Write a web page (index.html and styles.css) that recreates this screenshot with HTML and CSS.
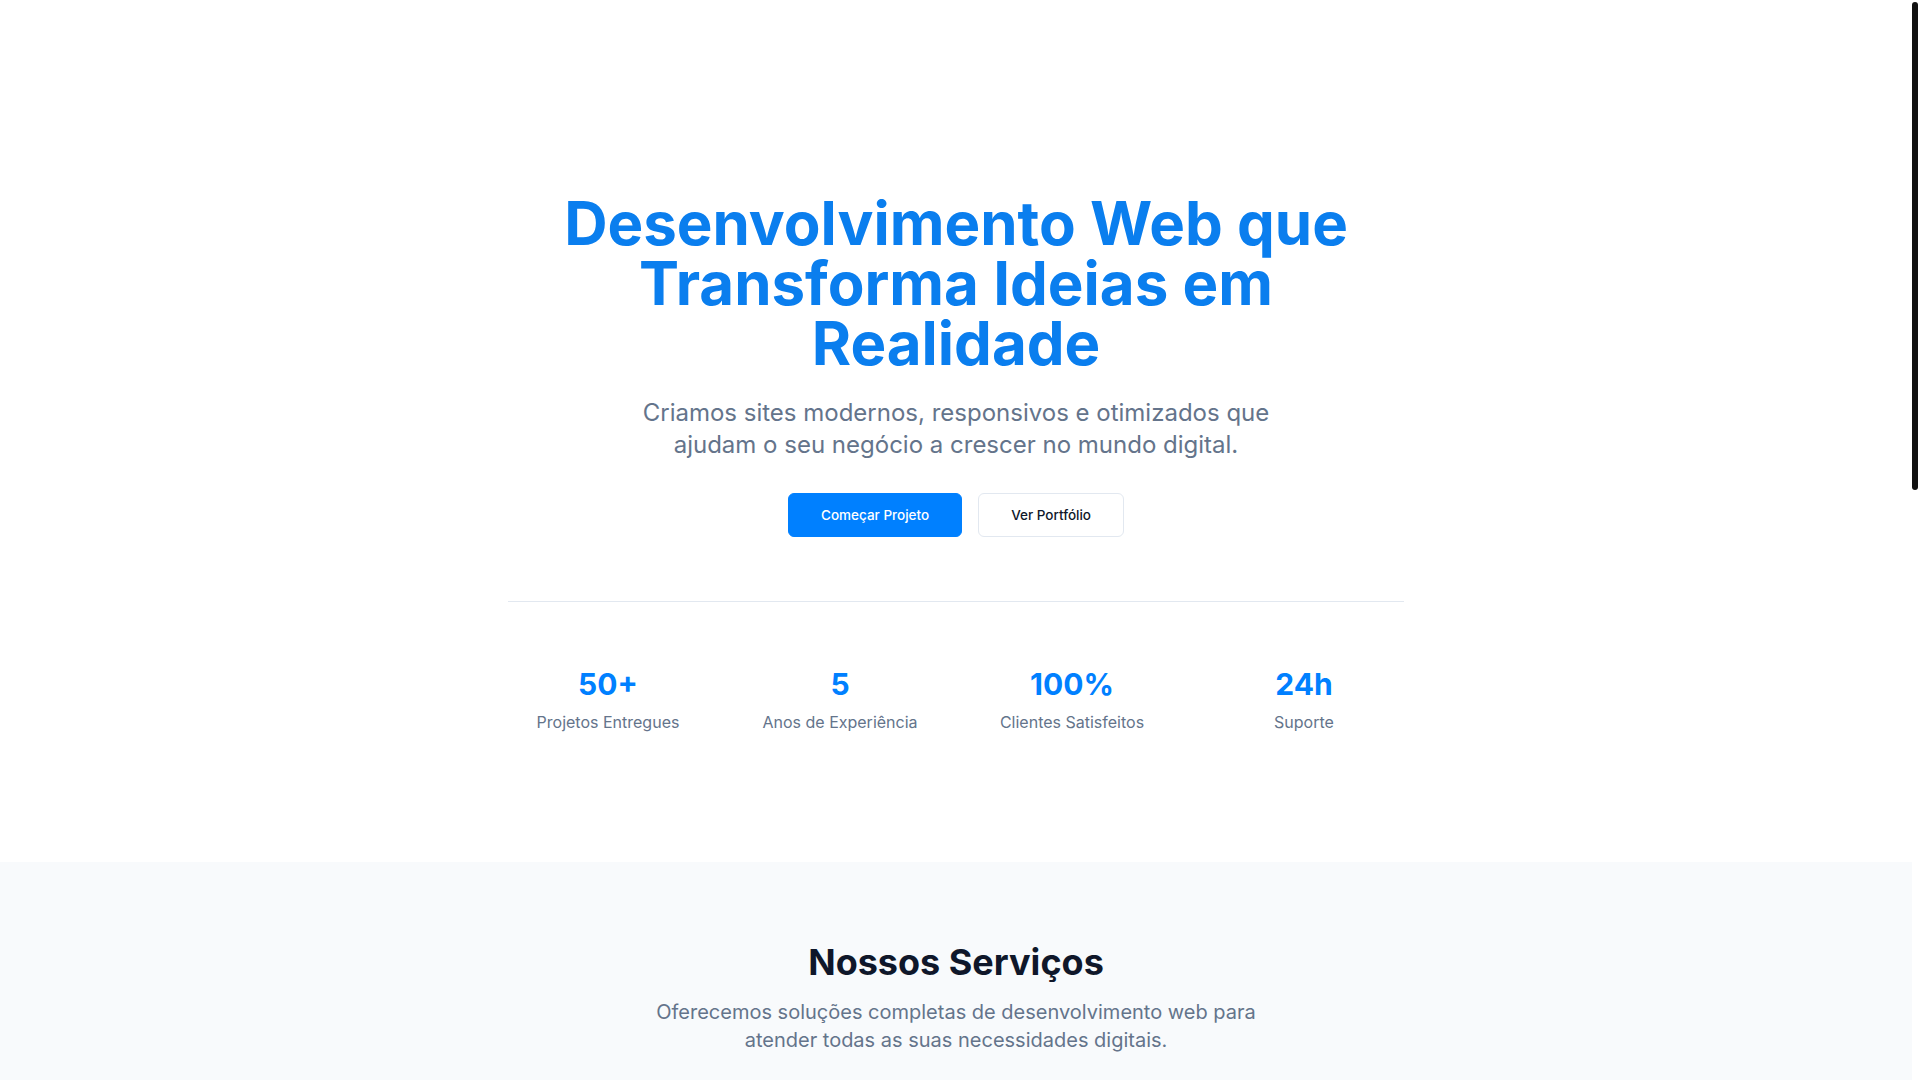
FILE: index.html
```html
<!DOCTYPE html>
<html lang="pt-BR">
<head>
<meta charset="utf-8">
<title>Desenvolvimento Web</title>
<link rel="stylesheet" href="styles.css">
</head>
<body>
<div class="page">
  <section class="hero">
    <div class="hero-inner">
      <h1 class="hero-title">Desenvolvimento Web que Transforma Ideias em Realidade</h1>
      <p class="hero-sub">Criamos sites modernos, responsivos e otimizados que ajudam o seu negócio a crescer no mundo digital.</p>
      <div class="hero-actions">
        <a class="btn btn-primary" href="#">Começar Projeto</a>
        <a class="btn btn-outline" href="#">Ver Portfólio</a>
      </div>
      <div class="stats">
        <div class="stat"><div class="stat-num">50+</div><div class="stat-label">Projetos Entregues</div></div>
        <div class="stat"><div class="stat-num">5</div><div class="stat-label">Anos de Experiência</div></div>
        <div class="stat"><div class="stat-num">100%</div><div class="stat-label">Clientes Satisfeitos</div></div>
        <div class="stat"><div class="stat-num">24h</div><div class="stat-label">Suporte</div></div>
      </div>
    </div>
  </section>
  <section class="services">
    <div class="services-inner">
      <h2 class="section-title">Nossos Serviços</h2>
      <p class="section-sub">Oferecemos soluções completas de desenvolvimento web para atender todas as suas necessidades digitais.</p>
    </div>
  </section>
</div>
<div class="scroll-rail" aria-hidden="true"><div class="scroll-thumb"></div></div>
</body>
</html>
```
FILE: styles.css
```css
html, body {
  margin: 0;
  height: 100%;
  overflow: hidden;
}
body {
  display: flex;
  font-family: Inter, "Noto Sans", sans-serif;
  color: #0f172a;
  background: #ffffff;
}
.page {
  flex: 1;
  min-width: 0;
  height: 100vh;
  display: flex;
  flex-direction: column;
  overflow: hidden;
}
.scroll-rail {
  width: 8px;
  flex: none;
  background: #ffffff;
  padding-top: 2px;
}
.scroll-thumb {
  width: 6px;
  height: 488px;
  background: #111111;
  border-radius: 3px;
}

.hero {
  padding: 193px 24px 128px;
}
.hero-inner {
  max-width: 896px;
  margin: 0 auto;
  text-align: center;
}
.hero-title {
  margin: 0 auto 24px;
  max-width: 896px;
  font-size: 60px;
  line-height: 60px;
  font-weight: 700;
  color: #0a7eee;
}
.hero-sub {
  margin: 0 auto 32px;
  max-width: 672px;
  font-size: 24px;
  line-height: 32px;
  color: #64748b;
}
.hero-actions {
  display: flex;
  justify-content: center;
  gap: 16px;
}
.btn {
  display: inline-block;
  padding: 11px 32px;
  font-size: 13.5px;
  line-height: 20px;
  font-weight: 500;
  border-radius: 6px;
  text-decoration: none;
}
.btn-primary {
  background: #0080ff;
  color: #ffffff;
  border: 1px solid #0080ff;
}
.btn-outline {
  background: #ffffff;
  color: #0f172a;
  border: 1px solid #e2e8f0;
}
.stats {
  margin-top: 64px;
  padding-top: 64px;
  border-top: 1px solid #e2e8f0;
  display: grid;
  grid-template-columns: repeat(4, 1fr);
  gap: 32px;
}
.stat-num {
  font-size: 30px;
  line-height: 36px;
  font-weight: 700;
  color: #0080ff;
  margin-bottom: 8px;
}
.stat-label {
  font-size: 16px;
  line-height: 24px;
  color: #64748b;
}

.services {
  flex: 1;
  background: #f8fafc;
  padding: 80px 24px 0;
}
.services-inner {
  max-width: 1200px;
  margin: 0 auto;
  text-align: center;
}
.section-title {
  margin: 0 0 16px;
  font-size: 36px;
  line-height: 40px;
  font-weight: 700;
  color: #0f172a;
}
.section-sub {
  margin: 0 auto;
  max-width: 672px;
  font-size: 20px;
  line-height: 28px;
  color: #64748b;
}
```
